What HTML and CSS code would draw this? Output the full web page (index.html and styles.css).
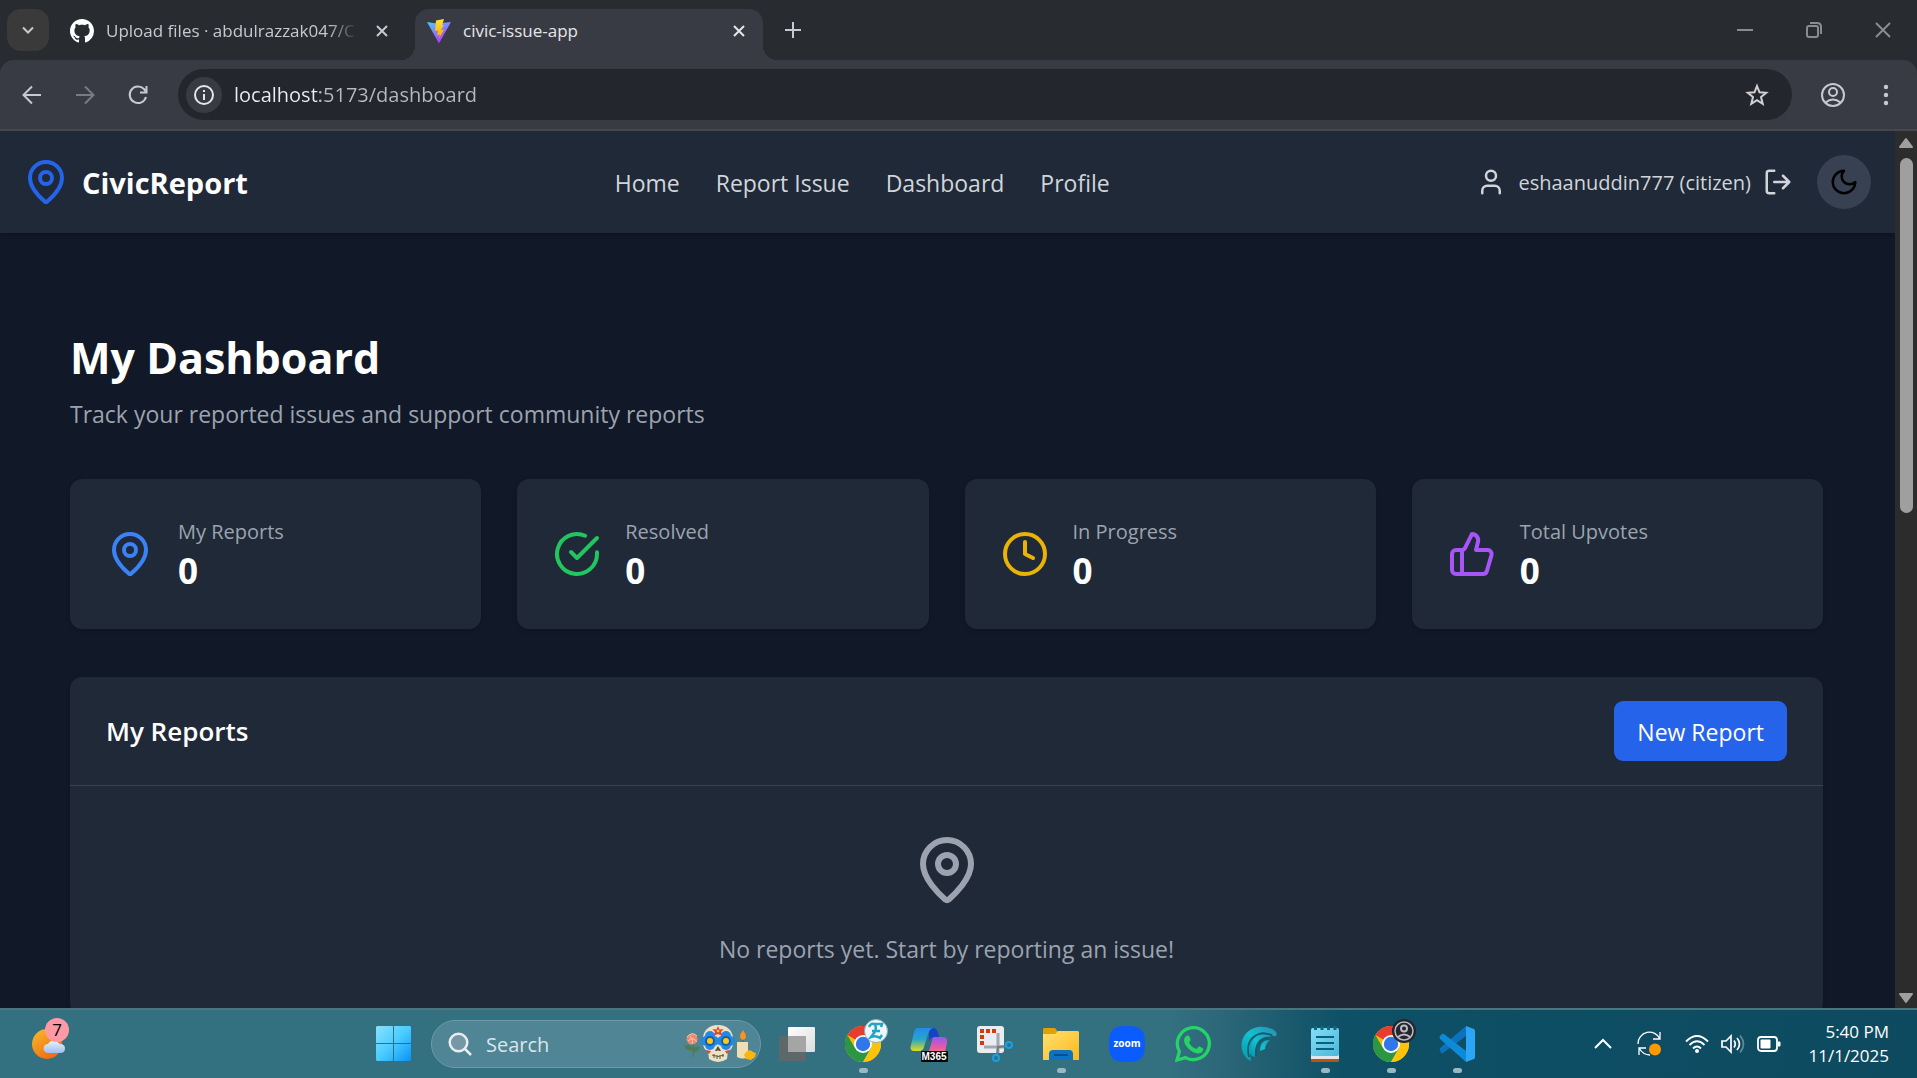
FILE: index.html
```html
<!DOCTYPE html>
<html lang="en">
<head>
<meta charset="utf-8">
<meta name="viewport" content="width=device-width, initial-scale=1">
<title>civic-issue-app</title>
<link rel="stylesheet" href="styles.css">
</head>
<body>
<svg class="defs" aria-hidden="true">
  <defs>
    <symbol id="pin" viewBox="0 0 24 24"><path d="M20 10c0 4.993-5.539 10.193-7.399 11.799a1 1 0 0 1-1.202 0C9.539 20.193 4 14.993 4 10a8 8 0 0 1 16 0"/><circle cx="12" cy="10" r="3"/></symbol>
    <symbol id="close" viewBox="0 0 24 24"><path d="M7 7l10 10M17 7L7 17"/></symbol>
    <symbol id="chrome" viewBox="0 0 36 36">
      <circle cx="18" cy="18" r="18" fill="#fbbc05"/>
      <path d="M18 18L2.400 9A18 18 0 0 1 33.600 9L18 9z" fill="#e63d33"/>
      <path d="M2.400 9A18 18 0 0 0 18 36L25.800 22.500L18 18L10.200 22.500z" fill="#2a9745"/>
      <path d="M18 9H33.600A18 18 0 0 1 18 36L25.800 22.500z" fill="#fdc20b"/>
      <circle cx="18" cy="18" r="9" fill="#fff"/><circle cx="18" cy="18" r="7.200" fill="#2f77ea"/>
    </symbol>
  </defs>
</svg>

<header class="browser">
  <div class="tabstrip">
    <button class="tab-search" aria-label="Search tabs"><svg class="line" width="24" height="24" viewBox="0 0 24 24"><path d="M7 9.500l5 5 5-5"/></svg></button>
    <div class="tab">
      <svg width="24" height="24" viewBox="0 0 16 16"><path fill="#fff" d="M8 0C3.580 0 0 3.580 0 8c0 3.540 2.290 6.530 5.470 7.590.4.070.55-.17.55-.38 0-.19-.01-.82-.01-1.490-2.010.37-2.530-.49-2.690-.94-.09-.23-.48-.94-.82-1.130-.28-.15-.68-.52-.01-.53.63-.01 1.080.58 1.230.82.72 1.210 1.870.87 2.330.66.07-.52.28-.87.51-1.070-1.780-.2-3.640-.89-3.640-3.950 0-.87.31-1.590.82-2.150-.08-.2-.36-1.020.08-2.120 0 0 .67-.21 2.200.82.64-.18 1.320-.27 2-.27s1.360.09 2 .27c1.530-1.040 2.200-.82 2.200-.82.44 1.100.16 1.920.08 2.120.51.56.82 1.270.82 2.150 0 3.070-1.870 3.750-3.650 3.950.29.25.54.73.54 1.480 0 1.070-.01 1.930-.01 2.200 0 .21.15.46.55.38A8.010 8.010 0 0 0 16 8c0-4.420-3.580-8-8-8z"/></svg>
      <span class="tab-title faded">Upload files · abdulrazzak047/C</span>
      <button class="tab-close" aria-label="Close tab"><svg class="line" width="24" height="24"><use href="#close"/></svg></button>
    </div>
    <div class="tab active">
      <svg width="24" height="24" viewBox="0 0 24 24">
        <defs><linearGradient id="vg" x1="0" y1="0" x2=".6" y2="1"><stop offset="0" stop-color="#41d1ff"/><stop offset="1" stop-color="#bd34fe"/></linearGradient><linearGradient id="vy" x1="0" y1="0" x2="0" y2="1"><stop offset="0" stop-color="#ffe13d"/><stop offset="1" stop-color="#ffa800"/></linearGradient></defs>
        <path fill="url(#vg)" d="M0 3l10 1.500L24 3 12.500 23.500q-.5.800-1 0z"/><path fill="url(#vy)" d="M17 0L9 1.500 8 12l3-.6-.8 5 2.800-.8-1 4 5-9-3.200.6L17 6l-2 .5z"/></svg>
      <span class="tab-title">civic-issue-app</span>
      <button class="tab-close" aria-label="Close tab"><svg class="line" width="24" height="24"><use href="#close"/></svg></button>
    </div>
    <button class="new-tab" aria-label="New tab"><svg class="line" width="24" height="24" viewBox="0 0 24 24"><path d="M12 4v16M4 12h16"/></svg></button>
    <div class="window-controls">
      <button aria-label="Minimize"><svg class="thin" width="16" height="16" viewBox="0 0 16 16"><path d="M0 8h16"/></svg></button>
      <button aria-label="Restore"><svg class="thin" width="16" height="16" viewBox="0 0 16 16"><rect x="1" y="4" width="11" height="11" rx="2"/><path d="M4 1h7q4 0 4 4v7"/></svg></button>
      <button aria-label="Close"><svg class="thin" width="16" height="16" viewBox="0 0 16 16"><path d="M1 1l14 14M15 1L1 15"/></svg></button>
    </div>
  </div>
  <div class="toolbar">
    <button aria-label="Back"><svg class="line" width="24" height="24" viewBox="0 0 24 24"><path d="M21 12H4M12 3.500L3.500 12l8.500 8.500"/></svg></button>
    <button class="dim" aria-label="Forward"><svg class="line" width="24" height="24" viewBox="0 0 24 24"><path d="M3 12h17M12 3.500l8.500 8.500-8.500 8.500"/></svg></button>
    <button aria-label="Reload"><svg class="line" width="24" height="24" viewBox="0 0 24 24"><path d="M20 14a8.300 8.300 0 1 1-2-8l2.500 3M20.500 3v6.500H14"/></svg></button>
    <div class="omnibox">
      <button class="site-info" aria-label="View site information"><svg class="line" width="24" height="24" viewBox="0 0 24 24"><circle cx="12" cy="12" r="9"/><path d="M12 11v6M12 7v2"/></svg></button>
      <input class="url" type="text" aria-label="Address" value="localhost:5173/dashboard">
      <button class="star" aria-label="Bookmark this tab"><svg class="line" width="24" height="24" viewBox="0 0 24 24"><path d="M12 3l2.500 6.300 6.700.5-5.200 4.300 1.700 6.700-5.700-3.700-5.700 3.700L8 14.100 2.800 9.800l6.700-.5z"/></svg></button>
    </div>
    <button aria-label="Profile"><svg class="line" width="26" height="26" viewBox="0 0 26 26"><circle cx="13" cy="13" r="11"/><circle cx="13" cy="10" r="4"/><path d="M5.500 20.500q7.500-6 15 0"/></svg></button>
    <button aria-label="Menu"><svg width="24" height="24" viewBox="0 0 24 24" fill="currentColor"><circle cx="12" cy="4" r="2.200"/><circle cx="12" cy="12" r="2.200"/><circle cx="12" cy="20" r="2.200"/></svg></button>
  </div>
</header>

<div class="viewport">
  <div class="page">
    <nav class="nav">
      <a class="brand" href="#"><svg class="stroke" width="48" height="48"><use href="#pin"/></svg><span>CivicReport</span></a>
      <div class="links"><a href="#">Home</a><a href="#">Report Issue</a><a href="#">Dashboard</a><a href="#">Profile</a></div>
      <div class="account">
        <div class="user">
          <svg class="stroke" width="30" height="30" viewBox="0 0 24 24"><path d="M19 21v-2a4 4 0 0 0-4-4H9a4 4 0 0 0-4 4v2"/><circle cx="12" cy="7" r="4"/></svg>
          <span>eshaanuddin777 (citizen)</span>
          <button aria-label="Log out"><svg class="stroke" width="30" height="30" viewBox="0 0 24 24"><path d="M9 21H5a2 2 0 0 1-2-2V5a2 2 0 0 1 2-2h4M16 17l5-5-5-5M21 12H9"/></svg></button>
        </div>
        <button class="theme" aria-label="Toggle theme"><svg class="stroke" width="30" height="30" viewBox="0 0 24 24"><path d="M12 3a6 6 0 0 0 9 9 9 9 0 1 1-9-9Z"/></svg></button>
      </div>
    </nav>
    <main class="content">
      <h1>My Dashboard</h1>
      <p class="lead">Track your reported issues and support community reports</p>
      <section class="stats">
        <article class="card stat"><svg class="stroke blue" width="48" height="48"><use href="#pin"/></svg><div><p>My Reports</p><strong>0</strong></div></article>
        <article class="card stat"><svg class="stroke green" width="48" height="48" viewBox="0 0 24 24"><path d="M22 11.080V12a10 10 0 1 1-5.930-9.140"/><path d="m9 11 3 3L22 4"/></svg><div><p>Resolved</p><strong>0</strong></div></article>
        <article class="card stat"><svg class="stroke yellow" width="48" height="48" viewBox="0 0 24 24"><circle cx="12" cy="12" r="10"/><path d="M12 6v6l4 2"/></svg><div><p>In Progress</p><strong>0</strong></div></article>
        <article class="card stat"><svg class="stroke purple" width="48" height="48" viewBox="0 0 24 24"><path d="M7 10v12"/><path d="M15 5.880 14 10h5.830a2 2 0 0 1 1.920 2.560l-2.330 8A2 2 0 0 1 17.500 22H4a2 2 0 0 1-2-2v-8a2 2 0 0 1 2-2h2.760a2 2 0 0 0 1.790-1.110L12 2a3.130 3.130 0 0 1 3 3.880Z"/></svg><div><p>Total Upvotes</p><strong>0</strong></div></article>
      </section>
      <section class="card reports">
        <div class="reports-head"><h2>My Reports</h2><button class="primary">New Report</button></div>
        <div class="empty"><svg class="stroke" width="72" height="72"><use href="#pin"/></svg><p>No reports yet. Start by reporting an issue!</p></div>
      </section>
    </main>
  </div>
  <div class="scrollbar" aria-hidden="true">
    <svg width="16" height="12" viewBox="0 0 16 12"><path d="M8 2l6 8H2z"/></svg>
    <div class="track"><div class="thumb"></div></div>
    <svg width="16" height="12" viewBox="0 0 16 12"><path d="M8 10L2 2h12z"/></svg>
  </div>
</div>

<footer class="taskbar">
  <button class="weather" aria-label="Widgets">
    <svg width="36" height="36" viewBox="0 0 36 36"><defs><linearGradient id="sun" x1="0" y1="0" x2=".7" y2="1"><stop offset="0" stop-color="#f6bd2f"/><stop offset="1" stop-color="#f2680c"/></linearGradient><linearGradient id="cl" x1="0" y1="0" x2="0" y2="1"><stop offset="0" stop-color="#e9f4ff"/><stop offset="1" stop-color="#9fbdf0"/></linearGradient></defs><circle cx="15" cy="18" r="15" fill="url(#sun)"/><path fill="url(#cl)" d="M16 27a4.500 4.500 0 0 1 0-9q3-5 8-3l4 3q5 0 5 4.500t-5 4.500z"/></svg>
    <span class="count">7</span>
  </button>
  <div class="apps">
    <button class="start" aria-label="Start"><svg width="36" height="36" viewBox="0 0 36 36"><defs><linearGradient id="win" x1="0" y1="0" x2="1" y2="1"><stop offset="0" stop-color="#8ae1ff"/><stop offset=".5" stop-color="#4accff"/><stop offset="1" stop-color="#0a92f7"/></linearGradient></defs><path fill="url(#win)" d="M1 0h16v17H0V1zM18 0h16l1 1v16H18zM0 18h17v17H1l-1-1zM18 18h17v16l-1 1H18z"/></svg></button>
    <label class="search">
      <svg width="24" height="24" viewBox="0 0 24 24" fill="none" stroke="#e9edf2" stroke-width="2.500"><circle cx="10.500" cy="10.500" r="8.800" fill="#7697a4"/><path d="M17 17l6 6"/></svg>
      <input type="text" placeholder="Search" aria-label="Search">
      <svg width="72" height="40" viewBox="0 0 72 40">
        <path d="M8 16q3 8 1 17M9 26q-7 0-8-4q7-1 8 4q5-5 6-2q-1 3-6 4" stroke="#507c55" fill="#507c55" stroke-width="1.300"/><circle cx="8" cy="15" r="5.500" fill="#e98b74"/><path d="M3 13q5-6 10-1M4 17q5-5 9 1M6 12q4 4 2 8" stroke="#ffc0a5" fill="none"/>
        <path fill="#eee1c5" d="M34 1c10 0 16 7 15 16 0 7-2 9-5 10l-1 8q-9 6-18 0l-1-8c-3-1-5-3-5-10C18 8 24 1 34 1z"/>
        <g fill="#2389e7"><circle cx="26" cy="12" r="5"/><circle cx="22" cy="17" r="5"/><circle cx="30" cy="17" r="5"/><circle cx="26" cy="21" r="5"/><circle cx="42" cy="12" r="5"/><circle cx="38" cy="17" r="5"/><circle cx="46" cy="17" r="5"/><circle cx="42" cy="21" r="5"/></g><g fill="#175db0"><circle cx="26" cy="17" r="5"/><circle cx="42" cy="17" r="5"/></g><g fill="#ffc812"><circle cx="26" cy="17" r="3"/><circle cx="42" cy="17" r="3"/></g>
        <path fill="#e34533" d="M34 2l1.500 3.500 4-.5-2.500 3 1.500 4-4.500-2-4.500 2 1.500-4-2.500-3 4 .5zM22 26l5 1-2 3zM46 26l-5 1 2 3z"/><circle cx="34" cy="7" r="1.300" fill="#ffd33b"/><path d="M34 22l-3 5h2l1-1 1 1h2z" fill="#4f513f"/><path d="M28 31q6 3 12 0M30 30v4M33 31v4M36 31v4M39 30v3" stroke="#57633f" fill="none"/>
        <path d="M53 18h11v15q-5 3-11 0z" fill="#f0ddb1"/><path d="M59 18v-4" stroke="#664"/><path d="M59 6q-6 8 0 10q6-2 0-10z" fill="#f99123"/><path d="M62 28l4-2 3 2 3 1-1 4-4 3-5-1-2-4z" fill="#fab60d"/>
      </svg>
    </label>
    <button class="app" aria-label="Task view"><svg width="36" height="36" viewBox="0 0 36 36"><defs><linearGradient id="tv" x1="0" y1="0" x2="1" y2="1"><stop offset="0" stop-color="#fff"/><stop offset="1" stop-color="#dcdcdc"/></linearGradient></defs><rect x="9" y="1" width="27" height="25" rx="1" fill="url(#tv)"/><rect y="10" width="27" height="25" rx="1" fill="#666" opacity=".85"/><path d="M9 10h18v16H9z" fill="#a5a5a5"/></svg></button>
    <button class="app running" aria-label="Chrome"><svg width="36" height="36"><use href="#chrome"/></svg><svg class="profile-badge" width="24" height="24" viewBox="0 0 24 24"><circle cx="12" cy="12" r="11.500" fill="#eef7fa" stroke="#8bb0b9"/><path d="M5 8q2-4 5-3h8l-1 3M11 5q2 6-1 9l-3 4q5-2 9 1l2-3M8 12h8" stroke="#22a6c4" stroke-width="2.500" fill="none"/></svg></button>
    <button class="app" aria-label="Microsoft 365"><svg width="38" height="36" viewBox="0 0 38 36"><defs><linearGradient id="ma" x1="0" y1="0" x2="0" y2="1"><stop offset="0" stop-color="#228be9"/><stop offset=".5" stop-color="#26a7cb"/><stop offset="1" stop-color="#e6dc1b"/></linearGradient><linearGradient id="mb" x1="0" y1="0" x2="0" y2="1"><stop offset="0" stop-color="#9a55ef"/><stop offset=".6" stop-color="#ed5c9d"/><stop offset="1" stop-color="#ff8b55"/></linearGradient></defs><path d="M19 2h5q4 1 5 9h-6q-3 1-4 5z" fill="#1742c5"/><path d="M8 2h15q-4 1-6 9l-3 10q-1 4-5 4H5q-6 0-4-6L4 6q1-4 4-4z" fill="url(#ma)"/><path d="M24 11h9q5 0 4 6l-3 13H12l7-5 3-10q0-3 2-4z" fill="url(#mb)"/><rect x="11" y="25" width="27" height="11" rx="1" fill="#050505"/><text x="24" y="34" class="m365">M365</text></svg></button>
    <button class="app" aria-label="Snipping Tool"><svg width="36" height="36" viewBox="0 0 36 36"><rect width="27" height="27" rx="3" fill="#e9edf2"/><path d="M3 3h4v4H3zM9 3h4v4H9zM15 3h4v4h-4zM3 9h4v4H3zM3 15h4v4H3z" fill="#d43c0a"/><path d="M21 7v20M7 21h20" stroke="#a1a8ae" stroke-width="3"/><path d="M20 29l1-8 8-1" stroke="#6e7b84" stroke-width="2" fill="none"/><circle cx="19" cy="32" r="3" fill="none" stroke="#17a0e5" stroke-width="2"/><circle cx="32" cy="19" r="3" fill="none" stroke="#17a0e5" stroke-width="2"/></svg></button>
    <button class="app running" aria-label="File Explorer"><svg width="36" height="36" viewBox="0 0 36 36"><defs><linearGradient id="fe" x1="0" y1="0" x2="1" y2="1"><stop offset="0" stop-color="#ffe06e"/><stop offset="1" stop-color="#fbb91e"/></linearGradient></defs><path d="M0 3q0-1 2-1h10l3 4v6H0z" fill="#e2a007"/><path d="M0 8h12l3-3h20l1 1v28H0z" fill="url(#fe)"/><path d="M6 34v-6q0-4 4-4h16q4 0 4 4v6z" fill="#0c72c2"/><path d="M11 29h14" stroke="#0a4c8e" stroke-width="2"/></svg></button>
    <button class="app" aria-label="Zoom"><svg width="36" height="36" viewBox="0 0 36 36"><path d="M18 0c14 0 18 4 18 18s-4 18-18 18S0 32 0 18 4 0 18 0z" fill="#0b5cff"/><text x="18" y="21" class="zoom">zoom</text></svg></button>
    <button class="app" aria-label="WhatsApp"><svg width="36" height="36" viewBox="0 0 36 36"><path d="M2 34l2.400-8.500A16 16 0 1 1 10.500 31.600z" fill="none" stroke="#25d366" stroke-width="3.300"/><path d="M12 9.500c1-.3 2 0 2.300.8l1.300 3.200q.2.700-.3 1.300l-1.300 1.600q2.700 5 7.500 6.500l1.700-2q.6-.6 1.300-.3l3.300 1.600q.8.500.5 1.500c-1 3.500-4 4.300-7 3.500C15 25.700 9.500 19.500 9 14.500q0-3.500 3-5z" fill="#25d366"/></svg></button>
    <button class="app" aria-label="Surf"><svg width="36" height="36" viewBox="0 0 36 36"><defs><linearGradient id="wv" x1="1" y1="0" x2="0" y2="1"><stop offset="0" stop-color="#2b8dae"/><stop offset=".5" stop-color="#13c2d0"/><stop offset="1" stop-color="#0794a7"/></linearGradient></defs><path d="M2 27C-5 9 14-6 33 4q4 3 2 6-2 1-4-1C18 1 5 12 10 35Q4 32 2 27z" fill="url(#wv)"/><path d="M9 28C8 13 16 4 31 10l-5 1C17 13 14 20 14 31q-3 0-5-3zM19 25c0-8 4-11 10-11-3 2-5 6-5 9z" fill="url(#wv)"/><path d="M8 31C4 15 14 3 31 9M15 30C14 18 19 12 27 12" stroke="#0b5f74" stroke-width="1.800" fill="none"/></svg></button>
    <button class="app running" aria-label="Notepad"><svg width="28" height="36" viewBox="0 0 28 36"><defs><linearGradient id="np" x1="0" y1="0" x2="1" y2="1"><stop offset="0" stop-color="#86def7"/><stop offset="1" stop-color="#49b8da"/></linearGradient></defs><path d="M0 30h28v5q0 1-1 1H1q-1 0-1-1z" fill="#b85311"/><path d="M0 28h28v5H0z" fill="#e4e5ea"/><rect y="2" width="28" height="28" rx="2" fill="url(#np)"/><path d="M5 11h18M5 17h18M5 23h18" stroke="#09617d" stroke-width="2"/><path d="M4.500 0v4M11 0v4M17.500 0v4M24 0v4" stroke="#11657d" stroke-width="3"/></svg></button>
    <button class="app running" aria-label="Chrome"><svg width="36" height="36"><use href="#chrome"/></svg><svg class="profile-badge" width="24" height="24" viewBox="0 0 24 24"><circle cx="12" cy="12" r="12" fill="#25262d"/><circle cx="12" cy="12" r="9" stroke="#b9bac3" stroke-width="1.500" fill="none"/><circle cx="12" cy="9.500" r="3" stroke="#b9bac3" stroke-width="2" fill="none"/><path d="M6 18q6-5 12 0" stroke="#b9bac3" stroke-width="2" fill="none"/></svg></button>
    <button class="app running" aria-label="Visual Studio Code"><svg width="36" height="36" viewBox="0 0 36 36"><path d="M1 24q-1-1 0-2L27 0v10L4 27q-1 .5-2 0z" fill="#0b72bd"/><path d="M1 10l2-2q1-.6 2 0l22 17v11L1 13q-1-2 0-3z" fill="#0e8bd8"/><path d="M27 0l8 3q1 .5 1 2v26q0 1.500-1 2l-8 3z" fill="#2aa6f5"/></svg></button>
  </div>
  <div class="tray">
    <button aria-label="Show hidden icons"><svg class="line white" width="24" height="24" viewBox="0 0 24 24"><path d="M4 16l8-8 8 8"/></svg></button>
    <button aria-label="Windows Update"><svg width="26" height="26" viewBox="0 0 26 26" fill="none" stroke="#fff" stroke-width="1.300"><path d="M1 13a11.500 11.500 0 0 1 22-5M23 1v7h-7M13 24Q6 24 2 17M2 24v-7h7"/><circle cx="18" cy="18.500" r="6" fill="#ff9900" stroke="none"/></svg></button>
    <button class="status" aria-label="Network, volume and battery">
      <svg width="24" height="20" viewBox="0 0 24 20" fill="none" stroke="#fff" stroke-width="1.800"><path d="M1 7.500q11-11 22 0M4.500 11q7.500-7.500 15 0M8 14.500q4-4 8 0"/><circle cx="12" cy="17" r="2" fill="#fff" stroke="none"/></svg>
      <svg width="24" height="20" viewBox="0 0 24 20" fill="none" stroke="#fff" stroke-width="1.700"><path d="M1 7h4l5-5v16l-5-5H1zM13 6.500q2.500 3.500 0 7M16 4q5 6 0 12"/><path d="M19 1.500q7 8.500 0 17" opacity=".35"/></svg>
      <svg width="24" height="20" viewBox="0 0 24 20"><rect x="1" y="3" width="19" height="14" rx="3" fill="none" stroke="#fff" stroke-width="1.800"/><rect x="3.500" y="5.500" width="10" height="9" rx="1" fill="#fff"/><path d="M21 7.500h1.500q1 0 1 1v3q0 1-1 1H21z" fill="#fff"/></svg>
    </button>
    <button class="clock"><span>5:40 PM</span><span>11/1/2025</span></button>
  </div>
</footer>
</body>
</html>
```
FILE: styles.css
```css
* { box-sizing: border-box; }
body {
  margin: 0;
  height: 100vh;
  display: flex;
  flex-direction: column;
  overflow: hidden;
  background: #111827;
  color: #fff;
  font-family: "Open Sans", "Noto Sans", sans-serif;
  font-size: 23px;
}
h1, h2, p { margin: 0; }
a { color: inherit; text-decoration: none; }
button, input { font: inherit; color: inherit; border: 0; background: none; padding: 0; outline: none; }
button { display: flex; align-items: center; justify-content: center; flex: none; }
svg { display: block; flex: none; }
.defs { position: absolute; width: 0; height: 0; }
.line { fill: none; stroke: currentColor; stroke-width: 2; }
.thin { fill: none; stroke: #8b8c8e; stroke-width: 2; }
.stroke { fill: none; stroke: currentColor; stroke-width: 2; stroke-linecap: round; stroke-linejoin: round; }
.white { color: #fff; }

/* browser frame */
.browser { flex: none; background: #282b2f; color: #c7c9d1; }
.tabstrip { height: 60px; display: flex; align-items: flex-end; }
.tab-search { width: 42px; height: 42px; margin: 0 0 9px 7px; border-radius: 14px; background: #3b3a3b; }
.tab { height: 51px; width: 348px; padding: 0 12px 8px; display: flex; align-items: center; gap: 12px; font-size: 17px; }
.tab:not(.active) { width: 357px; padding: 0 12px 8px 21px; }
.tab-title { flex: 1; overflow: hidden; white-space: nowrap; }
.faded { mask-image: linear-gradient(90deg, #000 88%, transparent); }
.active { position: relative; margin-left: 9px; border-radius: 14px 14px 0 0; background: #393b44; color: #e6e6e9; }
.active::before, .active::after { content: ""; position: absolute; bottom: 0; width: 14px; height: 14px; }
.active::before { right: 100%; background: radial-gradient(circle at 0 0, transparent 14px, #393b44 14px); }
.active::after { left: 100%; background: radial-gradient(circle at 100% 0, transparent 14px, #393b44 14px); }
.new-tab { width: 60px; height: 60px; }
.window-controls { margin-left: auto; display: flex; }
.window-controls button { width: 69px; height: 60px; }
.toolbar {
  height: 71px;
  padding: 0 5px;
  display: flex;
  align-items: center;
  border-bottom: 2px solid #45474a;
  border-radius: 14px 14px 0 0;
  background: #393b44;
}
.toolbar > button { width: 53px; height: 54px; }
.dim { opacity: .45; }
.omnibox { flex: 1; height: 51px; margin: 0 14px; padding: 0 8px; display: flex; align-items: center; border-radius: 26px; background: #24262e; }
.site-info { width: 36px; height: 36px; border-radius: 50%; background: #393b44; color: #e6e6e9; }
.url {
  flex: 1;
  min-width: 0;
  margin-left: 12px;
  font-size: 20px;
  color: transparent;
  background: linear-gradient(90deg, #eeeef0 86px, #b9babf 86px);
  background-clip: text;
}
.star { width: 54px; color: #d5d0d0; }

/* page */
.viewport { flex: 1; min-height: 0; display: flex; overflow: hidden; }
.page { flex: 1; min-width: 0; }
.nav {
  height: 102px;
  padding: 0 24px 0 22px;
  display: flex;
  align-items: center;
  justify-content: space-between;
  background: #1f2937;
  color: #d1d5db;
  box-shadow: 0 2px 4px rgba(0, 0, 0, .2);
}
.brand, .links, .account, .user { display: flex; align-items: center; }
.brand { gap: 12px; font-size: 29px; font-weight: 700; }
.brand svg { color: #2563eb; }
.brand span { color: #fff; }
.links { gap: 36px; padding-top: 2px; }
.account { gap: 24px; }
.user { gap: 12px; font-size: 20px; }
.theme { width: 54px; height: 54px; border-radius: 50%; background: #374151; color: #000; }
.content { padding: 98px 72px 48px 70px; }
h1 { font-size: 43px; line-height: 54px; font-weight: 700; }
.lead { margin: 11px 0 47px; line-height: 36px; color: #9ca3af; }
.stats { display: grid; grid-template-columns: repeat(4, 1fr); gap: 36px; margin-bottom: 48px; }
.card { border-radius: 12px; background: #1f2937; box-shadow: 0 2px 4px rgba(0, 0, 0, .15); }
.stat { min-height: 150px; padding: 0 36px; display: flex; align-items: center; gap: 24px; }
.stat div { padding-top: 4px; }
.stat p { font-size: 20px; line-height: 30px; font-weight: 500; color: #9ca3af; }
.stat strong { display: block; font-size: 35px; line-height: 48px; font-weight: 700; }
.blue { color: #3b82f6; }
.green { color: #22c55e; }
.yellow { color: #eab308; }
.purple { color: #a855f7; }
.reports-head { padding: 24px 36px; display: flex; align-items: center; justify-content: space-between; border-bottom: 1px solid #374151; }
h2 { font-size: 26px; font-weight: 600; }
.primary { height: 60px; padding: 2px 23px 0; border-radius: 9px; background: #2563eb; }
.empty { padding: 48px; display: flex; flex-direction: column; align-items: center; gap: 25px; line-height: 36px; color: #9ca3af; }

.scrollbar { width: 22px; padding: 6px 0 4px; display: flex; flex-direction: column; align-items: center; gap: 9px; background: #2c2c2c; }
.scrollbar svg { fill: #9f9f9f; stroke: #9f9f9f; stroke-width: 2; stroke-linejoin: round; }
.track { flex: 1; }
.thumb { width: 13px; height: 43%; border-radius: 7px; background: #9f9f9f; }

/* taskbar */
.taskbar {
  flex: none;
  height: 70px;
  padding: 0 16px 0 31px;
  display: flex;
  align-items: center;
  border-top: 2px solid #4b7480;
  background: linear-gradient(90deg, #337080 0 61%, #2a6677 64%, #0e5066 70%, #0d4a5f);
}
.weather { position: relative; width: 38px; height: 60px; margin-right: 298px; }
.count { position: absolute; top: 4px; right: 0; width: 24px; height: 24px; border-radius: 50%; background: #ff99a4; color: #000; font-size: 17px; line-height: 24px; }
.apps { display: flex; align-items: center; }
.start { width: 54px; margin-right: 10px; }
.search { width: 330px; height: 48px; margin-right: 3px; padding: 0 4px 0 16px; display: flex; align-items: center; gap: 14px; border: 1px solid #6f9aa7; border-radius: 24px; background: #4f8594; }
.search input { flex: 1; min-width: 0; font-size: 20px; }
.search input::placeholder { color: #dbe5ea; opacity: 1; }
.app { position: relative; width: 66px; height: 68px; }
.running::after { content: ""; position: absolute; bottom: 5px; width: 9px; height: 5px; border-radius: 3px; background: #9bb8c1; }
.profile-badge { position: absolute; top: 9px; right: 8px; }
.m365 { fill: #fff; font: 700 10px "Liberation Sans", sans-serif; text-anchor: middle; }
.zoom { fill: #fff; font: 700 10px "Open Sans", sans-serif; text-anchor: middle; }
.tray { margin-left: auto; display: flex; align-items: center; gap: 22px; }
.status { gap: 12px; }
.clock { min-width: 86px; margin-right: 12px; flex-direction: column; align-items: flex-end; font-size: 17px; line-height: 24px; }
```
